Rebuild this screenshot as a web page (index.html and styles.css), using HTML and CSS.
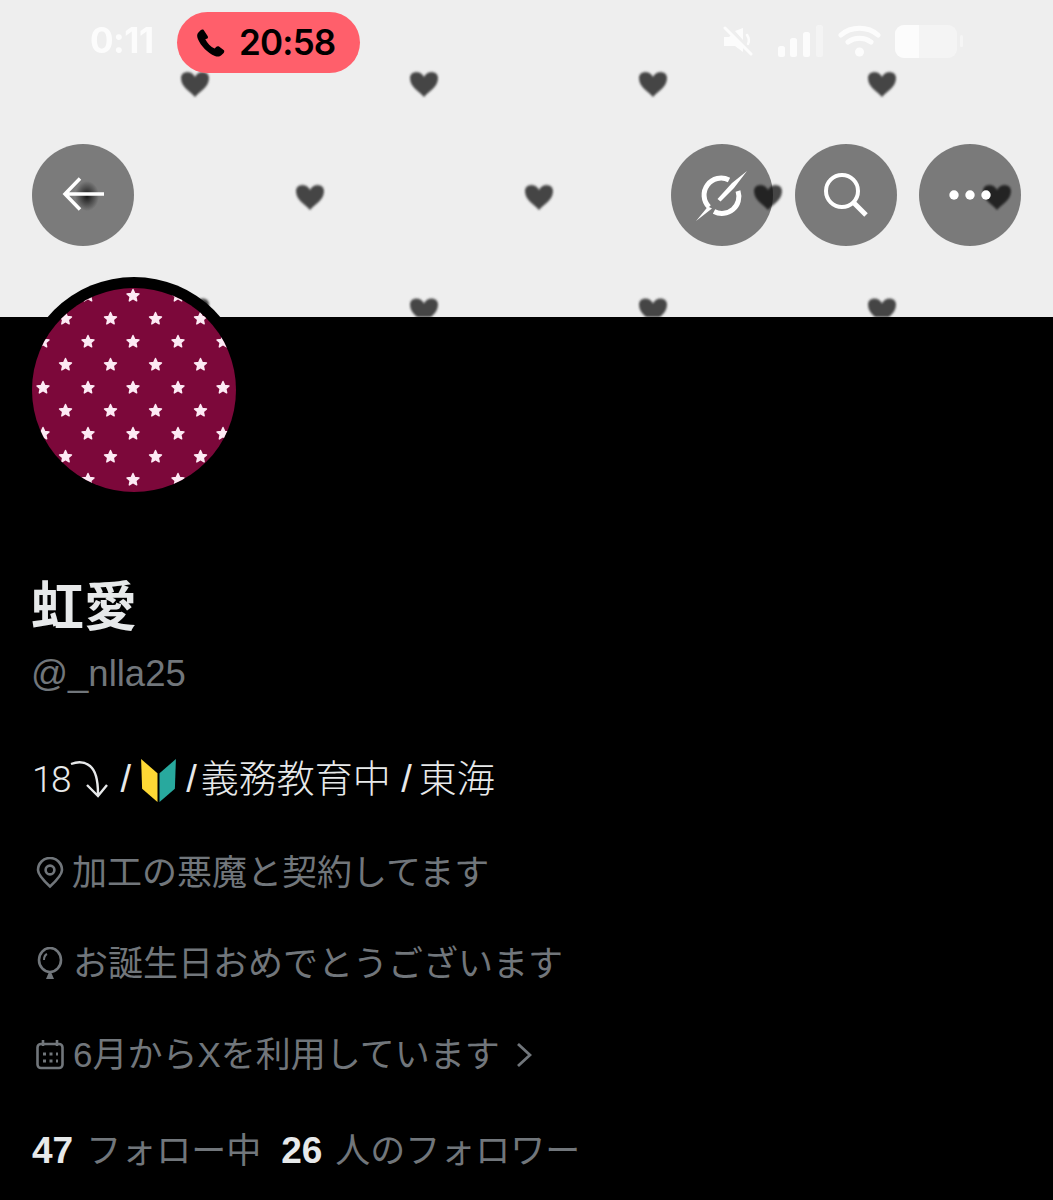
FILE: index.html
```html
<!DOCTYPE html>
<html lang="ja">
<head>
<meta charset="utf-8">
<title>虹愛</title>
<link rel="stylesheet" href="styles.css">
</head>
<body>
<svg class="defs" width="0" height="0" aria-hidden="true">
  <defs>
    <filter id="soft" x="-5%" y="-5%" width="110%" height="110%"><feGaussianBlur stdDeviation="1.2"/></filter>
    <filter id="softer" x="-5%" y="-5%" width="110%" height="110%"><feGaussianBlur stdDeviation="0.7"/></filter>
    <pattern id="hearts" width="229" height="226.5" patternUnits="userSpaceOnUse">
      <path fill="#454545" d="M195 97c-5-6-14-10-14-19 0-4 3-6 6.500-6 3.500 0 6.500 2 7.500 5 1-3 4-5 7.500-5 3.500 0 6.500 2 6.500 6 0 9-9 13-14 19z"/>
      <path fill="#454545" d="M81 210c-5-6-14-10-14-19 0-4 3-6 6.500-6 3.500 0 6.500 2 7.500 5 1-3 4-5 7.500-5 3.500 0 6.500 2 6.500 6 0 9-9 13-14 19z"/>
    </pattern>
    <pattern id="stars" width="45" height="46" patternUnits="userSpaceOnUse">
      <path fill="#fdeaf4" stroke="#fdeaf4" stroke-width="1.400" stroke-linejoin="round" d="M11 1.500l1.700 3.900 4.300.5-3.200 2.800 .9 4.200-3.700-2.200-3.700 2.200 .9-4.200L5 5.900l4.300-.5z"/>
      <path fill="#fdeaf4" stroke="#fdeaf4" stroke-width="1.400" stroke-linejoin="round" d="M33.500 24.500l1.700 3.900 4.300.5-3.200 2.800 .9 4.200-3.700-2.200-3.700 2.200 .9-4.200-3.200-2.800 4.300-.5z"/>
    </pattern>
  </defs>
</svg>

<header class="banner">
  <svg class="banner-art" width="1053" height="317" aria-hidden="true"><rect width="1053" height="317" fill="url(#hearts)" filter="url(#soft)"/></svg>

  <div class="status">
    <span class="clock">0:11</span>
    <span class="call">
      <svg class="call-icon" viewBox="0 0 30 30"><path fill="#000" d="M7.500 1.800c-.8-.6-1.900-.5-2.600.2L2.400 4.500C.9 6 .8 8.400 1.900 11c2.900 6.900 9.600 14 17 17 2.500 1 4.900.8 6.400-.7l2.400-2.400c.8-.8.8-2.100-.1-2.800l-4.600-3.500c-.8-.6-1.900-.5-2.600.2l-1.800 1.800c-3.900-1.900-7.400-5.500-9.300-9.400L11.400 10.500c.7-.7.8-1.800.2-2.600z"/></svg>
      <span class="call-time">20:58</span>
    </span>
    <span class="indicators">
      <svg class="ind-mute" width="30" height="30" viewBox="0 0 30 30"><path fill="#fff" d="M1 11h5l3-3 11 12v6l-8-6H1zM12 5l8-3v12z"/><path stroke="#fff" stroke-width="3" stroke-linecap="round" d="M2 2l26 26"/><path fill="none" stroke="#fff" stroke-width="2.500" stroke-linecap="round" d="M24 9c2 3 2 7 1 9"/></svg>
      <svg class="ind-signal" width="45" height="32" viewBox="0 0 45 32"><rect x="0" y="21" width="7" height="11" rx="2.500" fill="#fff"/><rect x="12" y="13" width="7" height="19" rx="2.500" fill="#fff"/><rect x="25" y="7" width="7" height="25" rx="2.500" fill="#fff"/><rect x="38" y="0" width="7" height="32" rx="2.500" fill="#fff" opacity=".45"/></svg>
      <svg class="ind-wifi" width="43" height="32" viewBox="0 0 43 32"><path fill="none" stroke="#fff" stroke-width="5" stroke-linecap="round" d="M3 10c10-9 27-9 37 0M10 17c7-5 16-5 23 0"/><circle cx="21.500" cy="27" r="4.500" fill="#fff"/></svg>
      <span class="battery"><span class="battery-fill"></span></span>
      <span class="battery-cap"></span>
    </span>
  </div>

  <nav class="toolbar">
    <button class="round round-back" aria-label="戻る">
      <svg width="44" height="44" viewBox="0 0 44 44"><path fill="none" stroke="#fff" stroke-width="3.500" d="M19 5.500 4 21l15 15.500M4.500 21H43"/></svg>
    </button>
    <div class="toolbar-right">
      <button class="round" aria-label="Grok">
        <svg width="56" height="56" viewBox="0 0 56 56"><path fill="none" stroke="#fff" stroke-width="5" d="M35 13A17 17 0 0 0 15 40M20 44.500A17 17 0 0 0 44 24"/><path fill="#fff" d="M53 4 38 16 23.500 32l3 2.500L40 21zM2 54l12-14.500 4 2z"/></svg>
      </button>
      <button class="round" aria-label="検索">
        <svg width="46" height="46" viewBox="0 0 46 46"><circle cx="19" cy="19" r="16" fill="none" stroke="#fff" stroke-width="4"/><path stroke="#fff" stroke-width="5" d="M30 30l13 13"/></svg>
      </button>
      <button class="round" aria-label="その他">
        <svg width="42" height="12" viewBox="0 0 42 12"><circle cx="5" cy="6" r="4.700" fill="#fff"/><circle cx="21" cy="6" r="4.700" fill="#fff"/><circle cx="37" cy="6" r="4.700" fill="#fff"/></svg>
      </button>
    </div>
  </nav>
</header>

<main class="profile">
  <div class="avatar">
    <svg width="204" height="204" viewBox="0 0 204 204" aria-hidden="true">
      <rect width="204" height="204" fill="#7c083a"/>
      <rect width="204" height="204" fill="url(#stars)" filter="url(#softer)"/>
    </svg>
  </div>

  <h1 class="name">虹愛</h1>
  <p class="handle">@_nlla25</p>

  <p class="bio"><span class="bio-num">18</span><svg class="bio-arrow" width="38" height="38" viewBox="0 0 38 38"><path fill="none" stroke="#e7e9ea" stroke-width="2.400" d="M1 4c8-3 14-2 19 2 5 4 8 13 8 28M17 25l11 11 9-11"/></svg> /<svg class="bio-badge" width="37" height="43" viewBox="0 0 34 42"><path fill="#fdd835" d="M0 0l16 14v28L1 29z"/><path fill="#28a99e" d="M18 14 34 0l-1 29-15 13z"/></svg><span class="slash-a">/</span>義務教育中 <span class="slash-b">/</span>東海</p>

  <ul class="facts">
    <li class="fact">
      <svg class="ico-pin" width="28" height="32" viewBox="0 0 28 32"><path fill="none" stroke="#71767b" stroke-width="2.600" d="M14 29.500C8 24 2 18 2 13a12 12 0 0 1 24 0c0 5-6 11-12 16.500z"/><circle cx="14" cy="13" r="4.400" fill="none" stroke="#71767b" stroke-width="2.600"/></svg>
      <span>加工の悪魔と契約してます</span>
    </li>
    <li class="fact">
      <svg class="ico-balloon" width="28" height="34" viewBox="0 0 28 34"><ellipse cx="14" cy="13" rx="11" ry="12" fill="none" stroke="#71767b" stroke-width="2.600"/><path fill="#71767b" d="M10 32h8l-3-7h-2z"/><path fill="none" stroke="#71767b" stroke-width="2" d="M8 13c0-3 1-5 3-6"/></svg>
      <span>お誕生日おめでとうございます</span>
    </li>
    <li class="fact">
      <svg class="ico-cal" width="28" height="30" viewBox="0 0 28 30"><rect x="1.500" y="4" width="25" height="24" rx="3.500" fill="none" stroke="#71767b" stroke-width="2.600"/><path stroke="#71767b" stroke-width="2.600" d="M7 0v6M21 0v6"/><path stroke="#71767b" stroke-width="3" stroke-dasharray="3 3.500" d="M7 14h15M7 21h15"/></svg>
      <span>6月からXを利用しています</span>
      <svg class="ico-chev" width="16" height="26" viewBox="0 0 16 26"><path fill="none" stroke="#71767b" stroke-width="2.800" d="M2 2l12 11L2 24"/></svg>
    </li>
  </ul>

  <p class="stats"><b>47</b><span class="stat-label">フォロー中</span><b class="stat-second">26</b><span class="stat-label">人のフォロワー</span></p>
</main>
</body>
</html>
```
FILE: styles.css
```css
* { box-sizing: border-box; }
html, body { margin: 0; padding: 0; background: #000; height: 1200px; overflow: hidden; }
body { font-family: "Liberation Sans", "Noto Sans CJK JP", sans-serif; color: #e7e9ea; }
.defs { position: absolute; }

.banner { position: relative; height: 317px; background: #eee; overflow: visible; }
.banner-art { position: absolute; left: 0; top: 0; display: block; }

.status { position: relative; display: flex; align-items: flex-start; height: 73px; padding: 12px 0 0 90px; }
.clock { font: 700 35px/56px "Inter", sans-serif; color: #fff; opacity: .85; width: 87px; letter-spacing: -.5px; }
.call { display: flex; align-items: center; gap: 13px; width: 183px; height: 61px; padding-left: 19px; background: #ff5f6b; border-radius: 31px; }
.call-icon { width: 30px; height: 30px; display: block; }
.call-time { font: 600 35px/59px "Inter", sans-serif; color: #000; letter-spacing: -.8px; }
.indicators { position: relative; display: flex; align-items: center; height: 34px; margin: 12px 0 0 auto; padding-right: 90px; opacity: .85; }
.ind-mute { margin-right: 25px; }
.ind-signal { margin-right: 15px; }
.ind-wifi { margin-right: 14px; }
.battery { display: block; width: 62px; height: 33px; border-radius: 9px; background: rgba(255,255,255,.45); overflow: hidden; }
.battery-fill { display: block; width: 24px; height: 100%; background: #fff; }
.battery-cap { display: block; width: 3px; height: 12px; margin-left: 3px; background: rgba(255,255,255,.5); border-radius: 2px; }

.toolbar { position: relative; display: flex; justify-content: space-between; margin-top: 71px; padding: 0 32px; }
.toolbar-right { display: flex; gap: 22px; }
.round { display: flex; align-items: center; justify-content: center; width: 102px; height: 102px; padding: 0; border: 0; border-radius: 50%; background: rgba(0,0,0,.485); }
.round-back { background: radial-gradient(ellipse 12px 15px at 55px 52px, rgba(15,15,15,.95), rgba(15,15,15,0)), #7b7b7b; }

.profile { position: relative; }
.avatar { width: 226px; height: 226px; margin: -40px 0 0 21px; padding: 11px; border-radius: 50%; background: #000; position: relative; }
.avatar svg { display: block; border-radius: 50%; }

.name { margin: 70px 0 0 31px; font: 700 53px/60px "Noto Sans CJK JP", sans-serif; }
.handle { margin: 19px 0 0 31px; font-size: 36.500px; line-height: 44px; color: #71767b; }
.bio { margin: 58px 0 0 32px; font-size: 38px; line-height: 50px; font-weight: 300; white-space: nowrap; }
.bio-num { font-family: "Roboto", sans-serif; font-weight: 300; font-size: 37px; letter-spacing: -1.500px; }
.bio-arrow { vertical-align: -6px; margin: 0 2px 0 0; }
.bio-badge { vertical-align: -10px; margin: 0 9px 0 9px; }
.slash-a { margin-right: 4px; }
.slash-b { margin-right: 7px; }

.facts { list-style: none; margin: 43px 0 0 32px; padding: 0; display: flex; flex-direction: column; gap: 41px; }
.fact { display: flex; align-items: center; height: 50px; font-size: 35px; line-height: 50px; color: #71767b; white-space: nowrap; }
.ico-pin { margin: 0 8px 0 4px; }
.ico-balloon { margin: 0 9px 0 4px; }
.ico-cal { margin: 0 9px 0 4px; }
.ico-chev { margin-left: 16px; }

.stats { margin: 46px 0 0 32px; height: 50px; display: flex; align-items: center; font-size: 35px; line-height: 50px; color: #71767b; white-space: nowrap; }
.stats b { color: #e7e9ea; font-weight: 700; font-size: 37px; }
.stat-label { margin-left: 13px; }
.stat-second { margin-left: 20px; }
```
